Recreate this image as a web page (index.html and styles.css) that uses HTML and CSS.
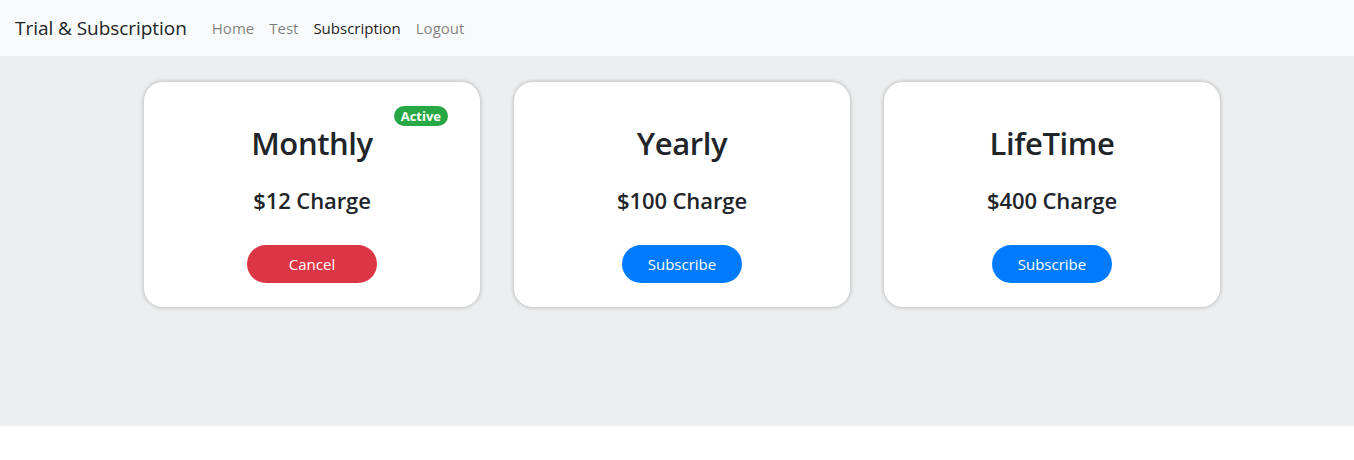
FILE: index.html
```html
<!DOCTYPE html>
<html>
<head>
<meta charset="utf-8">
<link rel="stylesheet" href="styles.css">
</head>
<body>
<nav class="navbar">
  <span class="brand">Trial &amp; Subscription</span>
  <ul class="nav">
    <li class="nav-link">Home</li>
    <li class="nav-link">Test</li>
    <li class="nav-link active">Subscription</li>
    <li class="nav-link">Logout</li>
  </ul>
</nav>
<main class="main">
  <div class="cards">
    <div class="card">
      <span class="badge">Active</span>
      <h2 class="title">Monthly</h2>
      <h3 class="price">$12 Charge</h3>
      <button class="btn btn-cancel">Cancel</button>
    </div>
    <div class="card">
      <h2 class="title">Yearly</h2>
      <h3 class="price">$100 Charge</h3>
      <button class="btn btn-sub">Subscribe</button>
    </div>
    <div class="card">
      <h2 class="title">LifeTime</h2>
      <h3 class="price">$400 Charge</h3>
      <button class="btn btn-sub">Subscribe</button>
    </div>
  </div>
</main>
</body>
</html>
```
FILE: styles.css
```css
* { box-sizing: border-box; }
html, body { margin: 0; padding: 0; background: #fff; }
body {
  font-family: "Open Sans", "Noto Sans", sans-serif;
  color: #212529;
}
.navbar {
  height: 56px;
  background: #f8f9fa;
  display: flex;
  align-items: center;
  padding: 0 15px;
}
.brand {
  font-size: 19px;
  margin-right: 25px;
  color: #212529;
  letter-spacing: -0.05px;
}
.nav {
  list-style: none;
  margin: 0;
  padding: 0;
  display: flex;
  gap: 15px;
}
.nav-link {
  font-size: 15px;
  color: rgba(0, 0, 0, 0.5);
}
.nav-link.active { color: rgba(0, 0, 0, 0.9); }
.main {
  background: #edeef0;
  height: 370px;
  padding-top: 25px;
}
.cards {
  display: flex;
  gap: 32px;
  padding-left: 143px;
}
.card {
  position: relative;
  width: 338px;
  height: 227px;
  background: #fff;
  border: 1px solid #d4d4d6;
  border-radius: 20px;
  box-shadow: 0 0 3px 1px rgba(0, 0, 0, 0.12);
  display: flex;
  flex-direction: column;
  align-items: center;
  padding-top: 42px;
}
.title {
  margin: 0;
  font-size: 31px;
  font-weight: 600;
  line-height: 38px;
  letter-spacing: -0.4px;
}
.price {
  margin: 23px 0 0;
  font-size: 22px;
  font-weight: 600;
  line-height: 30px;
  letter-spacing: -0.1px;
}
.btn {
  margin-top: 30px;
  height: 38px;
  border: none;
  border-radius: 19px;
  color: #fff;
  font-family: inherit;
  font-size: 15px;
}
.btn-cancel { width: 130px; background: #dc3545; }
.btn-sub { width: 120px; background: #007bff; }
.badge {
  position: absolute;
  top: 24px;
  right: 32px;
  background: #28a745;
  color: #fff;
  font-size: 13px;
  font-weight: 700;
  height: 20px;
  line-height: 20px;
  padding: 0 7px;
  border-radius: 10px;
}
```
